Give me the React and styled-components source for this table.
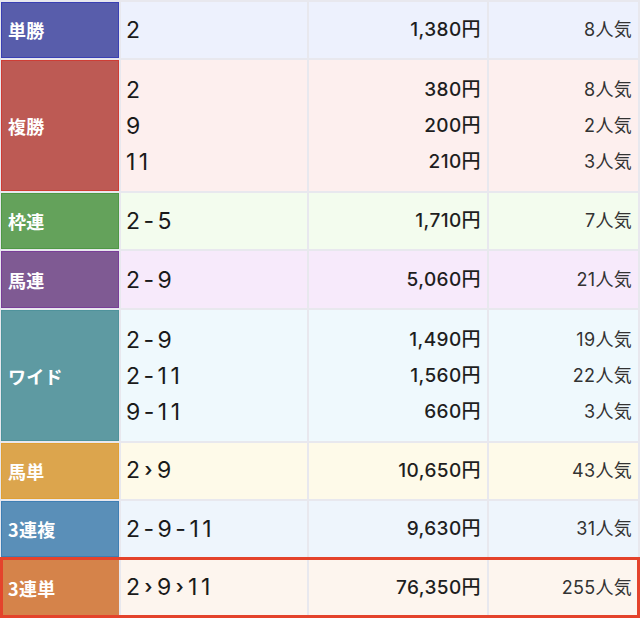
import React from "react"
import styled, { createGlobalStyle } from "styled-components"

const GlobalStyle = createGlobalStyle`
  body {
    margin: 0;
    background: #fff;
    font-family: "Noto Sans CJK JP", "Noto Sans", sans-serif;
  }
`

const Table = styled.div`
  width: 640px;
  box-sizing: border-box;
  background: #e8e8ee;
  padding: 2px 2px 2px 1px;
  display: flex;
  flex-direction: column;
  gap: 2px;
`

const Row = styled.div`
  position: relative;
  display: grid;
  grid-template-columns: 118px 186px 178px 1fr;
  column-gap: 2px;
  height: ${p => p.h}px;

  ${p =>
    p.highlight &&
    `
    &::after {
      content: "";
      position: absolute;
      left: -1px;
      right: -2px;
      top: -2px;
      bottom: -2px;
      border: 3px solid #e4432b;
      pointer-events: none;
    }
  `}
`

const Head = styled.div`
  box-sizing: border-box;
  background: ${p => p.color};
  border: 1px solid ${p => p.edge};
  color: #fff;
  font-weight: 700;
  font-size: 18px;
  display: flex;
  align-items: center;
  padding-left: 6px;
  letter-spacing: 0.3px;
`

const Cell = styled.div`
  background: ${p => p.bg};
  display: flex;
  flex-direction: column;
  justify-content: center;
  align-items: ${p => (p.right ? "flex-end" : "flex-start")};
  padding: ${p => (p.right ? `0 ${p.pad}px 0 0` : "0 0 0 5px")};
`

const Combo = styled.div`
  font-family: "Inter", "Noto Sans CJK JP", sans-serif;
  font-size: 23px;
  line-height: 36px;
  color: #1a1a1a;
  letter-spacing: 3.5px;
`

const Arrow = styled.span`
  font-size: 19px;
  font-weight: 600;
  position: relative;
  top: -2px;
  margin: 0 1px;
`

const Pay = styled.div`
  font-family: "Inter", "Noto Sans CJK JP", sans-serif;
  font-size: 19px;
  line-height: 36px;
  color: #1e1e1e;
  font-weight: 500;
  letter-spacing: 0.4px;
`

const Pop = styled.div`
  font-family: "Inter", "Noto Sans CJK JP", sans-serif;
  font-size: 18px;
  line-height: 36px;
  color: #333;
  letter-spacing: 0.3px;
`

const rows = [
  { name: "単勝", h: 56, color: "#585dab", edge: "#3a40b4", bg: "#edf1fd", items: [["2", "1,380円", "8人気"]] },
  {
    name: "複勝",
    h: 131,
    color: "#bd5a54",
    edge: "#cf3d35",
    bg: "#fdefee",
    items: [
      ["2", "380円", "8人気"],
      ["9", "200円", "2人気"],
      ["11", "210円", "3人気"],
    ],
  },
  { name: "枠連", h: 56, color: "#64a25b", edge: "#4f9845", bg: "#f3fcee", items: [["2-5", "1,710円", "7人気"]] },
  { name: "馬連", h: 57, color: "#7f5a93", edge: "#7a3e98", bg: "#f7eafb", items: [["2-9", "5,060円", "21人気"]] },
  {
    name: "ワイド",
    h: 131,
    color: "#5e9aa2",
    edge: "#4f939c",
    bg: "#eff9fd",
    items: [
      ["2-9", "1,490円", "19人気"],
      ["2-11", "1,560円", "22人気"],
      ["9-11", "660円", "3人気"],
    ],
  },
  { name: "馬単", h: 56, color: "#dca54d", edge: "#e0a035", bg: "#fefae9", items: [["2>9", "10,650円", "43人気"]] },
  { name: "3連複", h: 56, color: "#5a8fb8", edge: "#3f7fb4", bg: "#eef5fc", items: [["2-9-11", "9,630円", "31人気"]] },
  {
    name: "3連単",
    h: 57,
    color: "#d5834a",
    edge: "#d5834a",
    bg: "#fdf5ee",
    items: [["2>9>11", "76,350円", "255人気"]],
    highlight: true,
  },
]

function ComboText({ text }) {
  const parts = text.split(">")
  return (
    <Combo>
      {parts.map((p, i) => (
        <React.Fragment key={i}>
          {i > 0 && <Arrow>›</Arrow>}
          {p}
        </React.Fragment>
      ))}
    </Combo>
  )
}

export default function App() {
  return (
    <>
      <GlobalStyle />
      <Table>
        {rows.map(r => (
          <Row key={r.name} h={r.h} highlight={r.highlight}>
            <Head color={r.color} edge={r.edge}>
              {r.name}
            </Head>
            <Cell bg={r.bg}>
              {r.items.map((it, i) => (
                <ComboText key={i} text={it[0]} />
              ))}
            </Cell>
            <Cell bg={r.bg} right pad={6}>
              {r.items.map((it, i) => (
                <Pay key={i}>{it[1]}</Pay>
              ))}
            </Cell>
            <Cell bg={r.bg} right pad={6}>
              {r.items.map((it, i) => (
                <Pop key={i}>{it[2]}</Pop>
              ))}
            </Cell>
          </Row>
        ))}
      </Table>
    </>
  )
}
